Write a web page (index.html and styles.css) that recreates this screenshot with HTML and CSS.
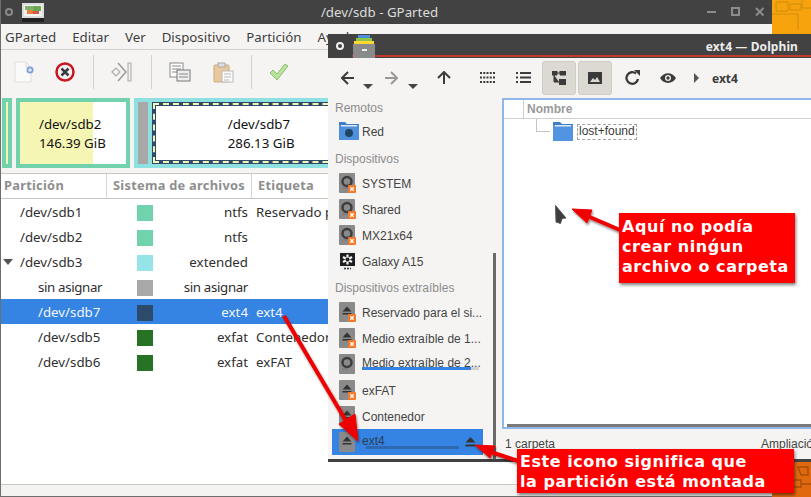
FILE: index.html
```html
<!DOCTYPE html>
<html lang="es">
<head>
  <meta charset="UTF-8" />
  <title>GParted y Dolphin</title>
  <link rel="stylesheet" href="styles.css">
</head>
<body>
  <svg class="defs" width="0" height="0">
    <symbol id="drive" viewBox="0 0 20 20">
      <rect x="0" width="16" height="20" rx="1" fill="#8a8a8a"/>
      <circle cx="8" cy="8.500" r="4.500" fill="none" stroke="#3d3d3d" stroke-width="2.500"/>
      <path d="M3 15h6" stroke="#777"/>
    </symbol>
    <symbol id="eject" viewBox="0 0 20 20">
      <rect x="0" width="16" height="20" rx="1" fill="#8a8a8a"/>
      <path d="M8 4.500l4.500 5h-9z" fill="#333"/>
      <rect x="3.500" y="11" width="9" height="1.500" fill="#333"/>
    </symbol>
    <symbol id="badge" viewBox="0 0 8 8">
      <rect width="8" height="8" rx="1" fill="#f47a2a"/>
      <path d="M2.300 2.300l3.400 3.400M5.700 2.300L2.300 5.700" stroke="#fff" stroke-width="1.300"/>
    </symbol>
  </svg>

  <div class="desktop">
    <svg class="wallpaper wallpaper-top" viewBox="0 0 39 34">
      <path d="M4 2h12v9H4zM18 4h11v6H18zM0 14h26v16M30 0v8h9" fill="none" stroke="#d08c0c" stroke-width="1"/>
    </svg>
    <svg class="wallpaper wallpaper-bottom" viewBox="0 0 39 35">
      <path d="M5 3h9v7h7v8h8v7h-9v-6h-8v-7H5zM26 5h10v8h-7zM30 22h9M3 22h8v9" fill="none" stroke="#a84d0a" stroke-width="1.500"/>
    </svg>

    <!-- GPARTED -->
    <section class="window gparted">
      <header class="titlebar">
        <svg class="gear gear-dim" viewBox="0 0 10 10"><circle cx="5" cy="5" r="3" fill="none" stroke="#8a8a8a" stroke-width="2"/></svg>
        <svg class="app-icon" viewBox="0 0 22 20">
          <rect x="0" y="1" width="22" height="15" fill="#ddd"/>
          <rect x="2" y="3" width="18" height="11" fill="#f4f4f0"/>
          <rect x="3" y="4" width="8" height="4" fill="#7fb26a"/>
          <rect x="11" y="4" width="8" height="5" fill="#6aa84f"/>
          <rect x="5" y="8" width="6" height="4" fill="#e8823a"/>
          <rect x="11" y="9" width="6" height="3" fill="#d9534f"/>
          <rect x="0" y="16" width="22" height="4" fill="#222"/>
        </svg>
        <h1 class="title">/dev/sdb - GParted</h1>
        <div class="controls">
          <svg viewBox="0 0 10 10"><rect y="4" width="9" height="2" fill="#8c8c8c"/></svg>
          <svg viewBox="0 0 10 10"><rect x="1" y="1" width="7" height="7" fill="none" stroke="#8c8c8c" stroke-width="2"/></svg>
          <svg viewBox="0 0 10 10"><path d="M1 1l7.500 7.500M8.500 1L1 8.500" stroke="#8c8c8c" stroke-width="2"/></svg>
        </div>
      </header>

      <nav class="menubar">
        <span>GParted</span><span>Editar</span><span>Ver</span><span>Dispositivo</span><span>Partición</span><span>Ayuda</span>
      </nav>

      <div class="toolbar">
        <svg class="tool" viewBox="0 0 20 22">
          <path d="M1 1h11l5 5v15H1z" fill="#fafafa" stroke="#ddd"/>
          <path d="M12 1v5h5" fill="#eee" stroke="#ddd"/>
          <circle cx="16" cy="9" r="3.500" fill="#7b9fd6"/>
          <path d="M14 9h4M16 7v4" stroke="#fff"/>
        </svg>
        <svg class="tool tool-x" viewBox="0 0 20 20">
          <circle cx="10" cy="10" r="8.500" fill="#f4f4f4" stroke="#c8161d" stroke-width="2.500"/>
          <path d="M6.500 6.500l7 7M13.500 6.500l-7 7" stroke="#3c3c3c" stroke-width="2.500"/>
        </svg>
        <i class="sep sep-a"></i>
        <svg class="tool tool-all" viewBox="0 0 22 20">
          <path d="M1 10l4-4 4 4-4 4z" fill="#f5f4f2" stroke="#aaa" stroke-width="1.200"/>
          <path d="M7 1l8 9-8 9" fill="none" stroke="#999" stroke-width="1.500"/>
          <rect x="17" y="1" width="3" height="18" fill="#eee" stroke="#aaa"/>
        </svg>
        <i class="sep sep-b"></i>
        <svg class="tool tool-copy" viewBox="0 0 22 20">
          <rect x="1" y="1" width="13" height="14" fill="#fff" stroke="#888"/>
          <path d="M3 4h9M3 7h9M3 10h7" stroke="#888"/>
          <rect x="8" y="8" width="13" height="11" fill="#eee" stroke="#777"/>
          <path d="M10 12h9M10 15h9" stroke="#888"/>
        </svg>
        <svg class="tool tool-paste" viewBox="0 0 21 21">
          <rect x="1" y="3" width="15" height="17" rx="1" fill="#e8c89c" stroke="#c8ab80"/>
          <rect x="5" y="1" width="7" height="4" fill="#ddd" stroke="#aaa"/>
          <rect x="9" y="9" width="11" height="11" fill="#fafafa" stroke="#bbb"/>
          <path d="M11 12h7M11 15h7M11 18h5" stroke="#bbb"/>
        </svg>
        <i class="sep sep-c"></i>
        <svg class="tool tool-check" viewBox="0 0 20 20">
          <path d="M1 11l3-3 4 4 8-10 3 2-11 14z" fill="#b9e39b" stroke="#8ebd74"/>
        </svg>
      </div>

      <div class="graph">
        <div class="part part-sliver"><i></i></div>
        <div class="part part-sdb2">
          <span class="part-used"></span>
          <span class="part-label">/dev/sdb2<br>146.39 GiB</span>
        </div>
        <div class="part-ext">
          <i class="part-free"></i>
          <div class="part-sdb7"><span class="part-label">/dev/sdb7<br>286.13 GiB</span></div>
        </div>
      </div>

      <div class="table">
        <div class="thead"><span>Partición</span><span>Sistema de archivos</span><span>Etiqueta</span></div>
        <div class="row"><span class="name lvl1">/dev/sdb1</span><i class="swatch c-ntfs"></i><span class="fs">ntfs</span><span class="tag">Reservado para el sistema</span></div>
        <div class="row"><span class="name lvl1">/dev/sdb2</span><i class="swatch c-ntfs"></i><span class="fs">ntfs</span><span class="tag"></span></div>
        <div class="row"><span class="name lvl1"><b class="expander"></b>/dev/sdb3</span><i class="swatch c-ext"></i><span class="fs">extended</span><span class="tag"></span></div>
        <div class="row"><span class="name lvl2 tight">sin asignar</span><i class="swatch c-free"></i><span class="fs tight">sin asignar</span><span class="tag"></span></div>
        <div class="row selected"><span class="name lvl2">/dev/sdb7</span><i class="swatch c-ext4"></i><span class="fs">ext4</span><span class="tag">ext4</span></div>
        <div class="row"><span class="name lvl2">/dev/sdb5</span><i class="swatch c-exfat"></i><span class="fs">exfat</span><span class="tag">Contenedor</span></div>
        <div class="row"><span class="name lvl2">/dev/sdb6</span><i class="swatch c-exfat"></i><span class="fs">exfat</span><span class="tag">exFAT</span></div>
      </div>
      <footer class="statusbar"></footer>
    </section>

    <!-- DOLPHIN -->
    <section class="window dolphin">
      <header class="titlebar titlebar-dolphin">
        <svg class="gear" viewBox="0 0 10 10"><circle cx="5" cy="5" r="3" fill="none" stroke="#f2f2f2" stroke-width="2"/></svg>
        <svg class="dolphin-icon" viewBox="0 0 22 23">
          <rect x="5" y="0" width="12" height="4" fill="#4a90d9"/>
          <rect x="3" y="3" width="16" height="4" fill="#8bc34a"/>
          <rect x="1" y="6" width="20" height="4" fill="#fdd835"/>
          <rect x="0" y="9" width="22" height="14" fill="#8a8a8a"/>
          <rect x="9" y="14" width="5" height="2" fill="#eee"/>
        </svg>
        <h1 class="title-dolphin">ext4 — Dolphin</h1>
      </header>

      <div class="dolphin-tools">
        <svg class="dt dt-back" viewBox="0 0 14 14"><path d="M7 1L1 7l6 6M1 7h12" fill="none" stroke="#3b3b3b" stroke-width="2"/></svg>
        <i class="caret caret-back"></i>
        <svg class="dt dt-fwd" viewBox="0 0 14 14"><path d="M7 1l6 6-6 6M13 7H1" fill="none" stroke="#999" stroke-width="2"/></svg>
        <i class="caret caret-fwd"></i>
        <svg class="dt dt-up" viewBox="0 0 14 14"><path d="M1 7l6-6 6 6M7 1v12" fill="none" stroke="#3b3b3b" stroke-width="2"/></svg>
        <svg class="dt dt-grid" viewBox="0 0 15 11"><path d="M0 1h15M0 5.500h15M0 10h15" fill="none" stroke="#3b3b3b" stroke-width="2" stroke-dasharray="2 1.250"/></svg>
        <svg class="dt dt-list" viewBox="0 0 15 11"><path d="M0 1h2M4 1h11M0 5.500h2M4 5.500h11M0 10h2M4 10h11" fill="none" stroke="#3b3b3b" stroke-width="2"/></svg>
        <div class="dt-toggle">
          <svg viewBox="0 0 14 14"><path d="M0 0h5v4H0zM8 0h6v4H8zM2 4v7h5M5 2h3" fill="#3b3b3b" stroke="#3b3b3b"/><rect x="7" y="8" width="7" height="6" fill="#3b3b3b"/></svg>
        </div>
        <div class="dt-toggle dt-toggle-2">
          <svg viewBox="0 0 14 12"><path d="M0 0h14v12H0z" fill="#3b3b3b"/><path d="M2 10l3-4 2 2 2-3 3 5z" fill="#dcd9d3"/></svg>
        </div>
        <svg class="dt dt-reload" viewBox="0 0 15 15"><path d="M13 9A5.800 5.800 0 1 1 11 3.500" fill="none" stroke="#3b3b3b" stroke-width="2.300"/><path d="M9 0h6v6z" fill="#3b3b3b"/></svg>
        <svg class="dt dt-eye" viewBox="0 0 16 10"><path d="M0 5c4-6.500 12-6.500 16 0-4 6.500-12 6.500-16 0z" fill="#3b3b3b"/><circle cx="8" cy="5" r="3" fill="#f5f4f2"/><circle cx="8" cy="5" r="1.700" fill="#3b3b3b"/></svg>
        <i class="crumb-arrow"></i>
        <span class="crumb">ext4</span>
      </div>

      <div class="dolphin-body">
        <aside class="places">
          <div class="places-inner">
            <h2 class="places-head first">Remotos</h2>
            <div class="place">
              <svg class="place-icon" viewBox="0 0 20 20">
                <path d="M0 1h6l2 2h12v16H0z" fill="#3f7fc9"/>
                <rect y="4" width="20" height="15" fill="#4f90dd"/>
                <rect x="2" y="4" width="16" height="1.500" fill="#dfe8f2"/>
                <circle cx="10" cy="12" r="4" fill="#1f4466"/>
              </svg>
              <span>Red</span>
            </div>
            <h2 class="places-head">Dispositivos</h2>
            <div class="place"><span class="place-icon"><svg viewBox="0 0 20 20"><use href="#drive"/></svg><svg class="place-badge" viewBox="0 0 8 8"><use href="#badge"/></svg></span><span>SYSTEM</span></div>
            <div class="place"><span class="place-icon"><svg viewBox="0 0 20 20"><use href="#drive"/></svg><svg class="place-badge" viewBox="0 0 8 8"><use href="#badge"/></svg></span><span>Shared</span></div>
            <div class="place"><span class="place-icon"><svg viewBox="0 0 20 20"><use href="#drive"/></svg><svg class="place-badge" viewBox="0 0 8 8"><use href="#badge"/></svg></span><span>MX21x64</span></div>
            <div class="place">
              <svg class="place-icon" viewBox="0 0 20 20">
                <rect x="1" y="0" width="15" height="20" fill="#eee"/>
                <rect x="1" y="2" width="15" height="13" fill="#1e1e1e"/>
                <path d="M8.500 3.500v10M4 6l9 5M13 6l-9 5" stroke="#f2f2f2" stroke-width="2.200"/>
                <circle cx="8.500" cy="8.500" r="2" fill="#1e1e1e"/>
                <path d="M5 17.500h7" stroke="#333" stroke-width="1.500" stroke-dasharray="2 1"/>
              </svg>
              <span>Galaxy A15</span>
            </div>
            <h2 class="places-head places-head-2">Dispositivos extraíbles</h2>
            <div class="place"><span class="place-icon"><svg viewBox="0 0 20 20"><use href="#eject"/></svg><svg class="place-badge" viewBox="0 0 8 8"><use href="#badge"/></svg></span><span>Reservado para el si...</span></div>
            <div class="place"><span class="place-icon"><svg viewBox="0 0 20 20"><use href="#eject"/></svg><svg class="place-badge" viewBox="0 0 8 8"><use href="#badge"/></svg></span><span>Medio extraíble de 1...</span></div>
            <div class="place place-used">
              <span class="place-icon"><svg viewBox="0 0 20 20"><use href="#drive"/></svg></span>
              <span class="place-text">Medio extraíble de 2...<i class="usage"><b></b></i></span>
            </div>
            <div class="place"><span class="place-icon"><svg viewBox="0 0 20 20"><use href="#eject"/></svg><svg class="place-badge" viewBox="0 0 8 8"><use href="#badge"/></svg></span><span>exFAT</span></div>
            <div class="place"><span class="place-icon"><svg viewBox="0 0 20 20"><use href="#eject"/></svg></span><span>Contenedor</span></div>
            <div class="place place-active">
              <span class="place-icon"><svg viewBox="0 0 20 20"><use href="#eject"/></svg></span>
              <span class="place-text">ext4</span>
              <i class="active-usage"></i>
              <svg class="eject-btn" viewBox="0 0 11 10"><path d="M5.500 0l5 5.500H.5z" fill="#333"/><rect x=".5" y="7.500" width="10" height="2" fill="#333"/></svg>
            </div>
          </div>
          <i class="places-scroll"></i>
        </aside>

        <div class="main">
          <div class="view">
            <div class="view-head"><span class="view-gutter"></span><span class="view-col">Nombre</span></div>
            <div class="view-row">
              <i class="branch"></i>
              <svg class="folder" viewBox="0 0 20 19">
                <path d="M0 0h7l2 2h11v17H0z" fill="#3f7fc9"/>
                <rect y="3" width="20" height="16" fill="#5294e2"/>
                <rect x="2" y="3" width="16" height="1.500" fill="#dfe8f2"/>
              </svg>
              <span class="focus-name">lost+found</span>
            </div>
            <i class="view-scroll"></i>
          </div>
          <div class="status"><span>1 carpeta</span><span>Ampliación</span></div>
        </div>
      </div>
    </section>

    <!-- NOTAS -->
    <svg class="arrows" viewBox="0 0 811 497">
      <defs>
        <filter id="shadow" x="-20%" y="-20%" width="140%" height="140%">
          <feDropShadow dx="1" dy="2" stdDeviation="1.200" flood-color="#000" flood-opacity=".45"/>
        </filter>
      </defs>
      <g fill="#ee0000" stroke="#ee0000" filter="url(#shadow)">
        <path d="M284 316L349 426" stroke-width="4" fill="none"/>
        <path d="M358 441L339 424L355 414z"/>
        <path d="M518 461L488 451" stroke-width="4" fill="none"/>
        <path d="M475 445L495 446L490 458z"/>
        <path d="M620 230L585 215" stroke-width="4" fill="none"/>
        <path d="M572 209L592 210L587 223z"/>
      </g>
    </svg>
    <svg class="cursor" viewBox="0 0 12 20"><path d="M0.500 0.500L11 13l-4 .5 -1.500 5L1 17z" fill="#3d3d3d" stroke="#555"/></svg>
    <div class="note note-a">Aquí no podía<br>crear ninǵun<br>archivo o carpeta</div>
    <div class="note note-b">Este icono significa que<br>la partición está montada</div>
  </div>
</body>
</html>
```

FILE: styles.css
```css
html, body {
  margin: 0;
  padding: 0;
  overflow: hidden;
  height: 100%;
}

.defs {
  position: absolute;
}

.desktop {
  position: relative;
  width: 811px;
  height: 497px;
  overflow: hidden;
  background: #f7a30d;
  font-family: "Noto Sans", sans-serif;
}

.wallpaper {
  position: absolute;
  left: 772px;
  width: 39px;
}

.wallpaper-top {
  top: 0;
  height: 34px;
}

.wallpaper-bottom {
  top: 462px;
  height: 35px;
  background: #e0690f;
}

.window {
  position: absolute;
  display: flex;
  flex-direction: column;
}

/* GPARTED */
.gparted {
  left: 0;
  top: 0;
  width: 772px;
  height: 497px;
  box-sizing: border-box;
  background: #fff;
  border-left: 1px solid #6e6e6e;
  border-bottom: 1px solid #6e6e6e;
}

.titlebar {
  position: relative;
  flex: none;
  display: flex;
  align-items: center;
  height: 24px;
  background: #424242;
}

.gear {
  flex: none;
  width: 10px;
  height: 10px;
  margin-left: 7px;
}

.gear-dim {
  margin-left: 3px;
}

.app-icon {
  flex: none;
  width: 22px;
  height: 20px;
  margin-left: 8px;
}

.title {
  position: absolute;
  left: 0;
  right: 14px;
  margin: 0;
  text-align: center;
  font-size: 13.3px;
  font-weight: normal;
  color: #dcdcdc;
}

.controls {
  position: absolute;
  right: 7px;
  display: flex;
  gap: 14px;
}

.controls svg {
  width: 10px;
  height: 10px;
}

.menubar {
  flex: none;
  display: flex;
  gap: 16px;
  height: 26px;
  box-sizing: border-box;
  padding: 3px 0 0 4px;
  background: #f5f4f2;
  border-bottom: 1px solid #d4d2ce;
  font-size: 13.3px;
  line-height: 20px;
  color: #3d3d3d;
}

.toolbar {
  flex: none;
  display: flex;
  align-items: center;
  height: 42px;
  box-sizing: border-box;
  padding: 2px 0 0 13px;
  background: #f5f4f2;
}

.tool {
  flex: none;
  width: 20px;
  height: 22px;
}

.tool-x {
  margin-left: 21px;
  height: 20px;
}

.sep {
  flex: none;
  width: 1px;
  height: 34px;
  background: #d4d2ce;
}

.sep-a {
  margin-left: 18px;
}

.tool-all {
  width: 22px;
  margin-left: 17px;
  height: 20px;
}

.sep-b {
  margin-left: 18px;
}

.tool-copy {
  width: 22px;
  margin-left: 17px;
  height: 20px;
}

.tool-paste {
  width: 21px;
  margin-left: 22px;
  height: 21px;
}

.sep-c {
  margin-left: 17px;
}

.tool-check {
  width: 20px;
  margin-left: 17px;
  height: 20px;
}

.graph {
  flex: none;
  display: flex;
  gap: 4px;
  height: 82px;
  box-sizing: border-box;
  padding: 6px 0 0 1px;
  background: #f5f4f2;
  border-bottom: 1px solid #c9c7c3;
  align-items: flex-start;
}

.part {
  position: relative;
  box-sizing: border-box;
  height: 70px;
  border: 4px solid #72d2ae;
  background: #fff;
}

.part-sliver {
  width: 10px;
}

.part-sliver i {
  display: block;
  width: 2px;
  height: 100%;
  background: #f6f6b4;
}

.part-sdb2 {
  width: 114px;
}

.part-used {
  position: absolute;
  left: 0;
  top: 0;
  bottom: 0;
  width: 73px;
  background: #f6f6b4;
}

.part-label {
  position: relative;
  display: block;
  font-size: 13.3px;
  line-height: 19px;
  color: #111;
}

.part-sdb2 .part-label {
  padding: 13px 0 0 19px;
}

.part-ext {
  display: flex;
  gap: 4px;
  box-sizing: border-box;
  width: 640px;
  height: 70px;
  border: 4px solid #8fe0e0;
  background: #8fe0e0;
}

.part-free {
  flex: none;
  width: 10px;
  background: #a8a8a8;
}

.part-sdb7 {
  flex: 1;
  box-sizing: border-box;
  border: 4px solid #2e4a6b;
  outline: 2px dashed #f6f6b4;
  outline-offset: -3px;
  background: #fff;
}

.part-sdb7 .part-label {
  padding: 9px 0 0 72px;
}

.table {
  flex: 1;
  background: #fff;
  font-size: 13.3px;
  color: #2f2f2f;
}

.thead {
  display: grid;
  grid-template-columns: 106px 145px 1fr;
  height: 25px;
  box-sizing: border-box;
  border-bottom: 1px solid #c9c7c3;
  font-size: 12.8px;
  font-weight: bold;
  line-height: 23px;
  letter-spacing: .28px;
  color: #8e8e8e;
}

.thead span {
  padding-left: 6px;
  border-right: 1px solid #d8d6d2;
}

.thead span:first-child {
  padding-left: 3px;
}

.row {
  display: grid;
  grid-template-columns: 136px 16px 95px 1fr;
  align-items: center;
  height: 25px;
  line-height: 27px;
  white-space: nowrap;
}

.row.selected {
  background: #3584e4;
  color: #f2f6fc;
}

.name {
  display: flex;
  align-items: center;
}

.tight {
  letter-spacing: -.35px;
}

.lvl1 {
  padding-left: 19px;
  position: relative;
}

.lvl2 {
  padding-left: 37px;
}

.expander {
  position: absolute;
  left: 2px;
  top: 10px;
  border-left: 5.500px solid transparent;
  border-right: 5.500px solid transparent;
  border-top: 6px solid #555;
}

.swatch {
  width: 16px;
  height: 16px;
}

.c-ntfs { background: #72d2ae; }
.c-ext { background: #96e4e8; }
.c-free { background: #a8a8a8; }
.c-ext4 { background: #2e4a6b; }
.c-exfat { background: #267326; }

.fs {
  text-align: right;
}

.tag {
  padding-left: 8px;
}

.statusbar {
  flex: none;
  height: 11px;
  background: #f4f3f1;
  border-top: 1px solid #c9c7c3;
}

/* DOLPHIN */
.dolphin {
  left: 328px;
  top: 34px;
  width: 483px;
  height: 428px;
  box-sizing: border-box;
  background: #f5f4f2;
  border-bottom: 3px solid #424242;
  font-family: "Liberation Sans", sans-serif;
  font-size: 12px;
  color: #444;
}

.titlebar-dolphin {
  height: 24px;
}

.titlebar-dolphin::after {
  content: "";
  position: absolute;
  left: 24px;
  right: 0;
  bottom: 1px;
  height: 2px;
  background: #c23b2e;
}

.dolphin-icon {
  position: relative;
  z-index: 1;
  flex: none;
  width: 22px;
  height: 23px;
  margin-left: 8px;
}

.title-dolphin {
  margin: 0 13px 0 auto;
  font-family: "Noto Sans", sans-serif;
  font-size: 12px;
  font-weight: bold;
  letter-spacing: .1px;
  color: #ededed;
}

.dolphin-tools {
  flex: none;
  position: relative;
  display: flex;
  align-items: center;
  height: 40px;
}

.dt {
  flex: none;
  width: 14px;
  height: 14px;
  margin-top: -1px;
}

.dt-back { margin-left: 13px; }
.dt-fwd { margin-left: 11px; }
.dt-up { margin-left: 19px; }
.dt-grid { margin-left: 29px; width: 15px; height: 11px; }
.dt-list { margin-left: 21px; width: 15px; height: 11px; }
.dt-reload { margin-left: 13px; width: 15px; height: 15px; }
.dt-eye { margin-left: 20px; width: 16px; height: 10px; }

.caret {
  flex: none;
  margin: 16px 0 0 8px;
  border-left: 5px solid transparent;
  border-right: 5px solid transparent;
  border-top: 5px solid #444;
}

.caret-fwd { margin-left: 10px; }

.dt-toggle {
  flex: none;
  display: flex;
  align-items: center;
  justify-content: center;
  width: 34px;
  height: 34px;
  margin-left: 11px;
  box-sizing: border-box;
  background: #dcd9d3;
  border: 1px solid #cfccc6;
  border-radius: 3px;
}

.dt-toggle svg {
  width: 14px;
  height: 14px;
}

.dt-toggle-2 {
  margin-left: 2px;
}

.crumb-arrow {
  flex: none;
  margin-left: 18px;
  border-top: 5px solid transparent;
  border-bottom: 5px solid transparent;
  border-left: 5px solid #555;
}

.crumb {
  margin-left: 13px;
  font-family: "Noto Sans", sans-serif;
  font-size: 12px;
  font-weight: bold;
  color: #3b3b3b;
}

.dolphin-body {
  flex: 1;
  display: flex;
  min-height: 0;
}

.places {
  position: relative;
  flex: none;
  width: 174px;
  padding-top: 5px;
  box-sizing: border-box;
  overflow: hidden;
}

.places-inner {
  height: 100%;
  overflow: hidden;
}

.places-head {
  margin: 2px 0 0;
  padding-left: 7px;
  height: 24px;
  font-size: 12px;
  font-weight: normal;
  line-height: 26px;
  color: #8c8c8c;
}

.places-head.first {
  margin-top: -9px;
  line-height: 28px;
}

.places-head-2 {
  margin-top: 1px;
}

.place {
  position: relative;
  display: flex;
  align-items: center;
  gap: 3px;
  width: 151px;
  height: 26px;
  margin-left: 4px;
  padding-left: 7px;
  box-sizing: border-box;
  white-space: nowrap;
}

.place > span:not(.place-icon) {
  padding-top: 2px;
}

.place-icon {
  position: relative;
  flex: none;
  display: block;
  width: 20px;
  height: 20px;
}

.place-icon svg {
  display: block;
  width: 20px;
  height: 20px;
}

.place-icon .place-badge {
  position: absolute;
  left: 9px;
  bottom: 0;
  width: 8px;
  height: 8px;
}

.place-text {
  position: relative;
}

.place-used .place-text {
  top: -2px;
}

.usage {
  position: absolute;
  left: 0;
  top: 13px;
  width: 117px;
  height: 3px;
  background: #d4d2ce;
}

.usage b {
  display: block;
  width: 109px;
  height: 3px;
  background: #3584e4;
}

.place-active {
  background: #3584e4;
  color: #2c3b52;
}

.place-active .place-text {
  top: -2px;
}

.active-usage {
  position: absolute;
  left: 34px;
  top: 17px;
  width: 93px;
  height: 3px;
  background: #2f68ae;
}

.eject-btn {
  position: absolute;
  right: 7px;
  top: 8px;
  width: 11px;
  height: 10px;
}

.places-scroll {
  position: absolute;
  left: 165px;
  top: 155px;
  bottom: 0;
  width: 3px;
  background: #6a6a6a;
}

.main {
  flex: 1;
  display: flex;
  flex-direction: column;
  min-width: 0;
}

.view {
  position: relative;
  flex: none;
  height: 331px;
  box-sizing: border-box;
  background: #fff;
  border: 2px solid #8db8e8;
  border-right: none;
}

.view-head {
  display: flex;
  height: 19px;
  box-sizing: border-box;
  border-bottom: 1px solid #cfcfcf;
  line-height: 18px;
}

.view-gutter {
  width: 19px;
  border-right: 1px solid #cfcfcf;
}

.view-col {
  padding-left: 3px;
  font-weight: bold;
  color: #9a9a9a;
}

.view-row {
  position: relative;
  display: flex;
  align-items: center;
  height: 24px;
  padding-left: 49px;
}

.branch {
  position: absolute;
  left: 32px;
  top: 0;
  width: 14px;
  height: 13px;
  box-sizing: border-box;
  border-left: 1px solid #c4c4c4;
  border-bottom: 1px solid #c4c4c4;
}

.folder {
  flex: none;
  width: 20px;
  height: 19px;
}

.focus-name {
  margin: 1px 0 0 4px;
  padding: 0 1px;
  height: 14px;
  line-height: 13px;
  border: 1px dashed #a0a0a0;
  color: #3a3a3a;
}

.view-scroll {
  position: absolute;
  left: 3px;
  right: 0;
  bottom: 0;
  height: 3px;
  background: #7a7a7a;
}

.status {
  flex: 1;
  display: flex;
  justify-content: space-between;
  padding: 8px 0 0 3px;
  white-space: nowrap;
  overflow: hidden;
  color: #444;
}

.status span:last-child {
  width: 50px;
}

/* NOTAS */
.arrows {
  position: absolute;
  left: 0;
  top: 0;
  width: 811px;
  height: 497px;
  pointer-events: none;
}

.cursor {
  position: absolute;
  left: 555px;
  top: 205px;
  width: 12px;
  height: 20px;
}

.note {
  position: absolute;
  box-sizing: border-box;
  padding: 3px;
  background: #ff0000;
  box-shadow: 1px 2px 3px rgba(0, 0, 0, 0.5);
  font-family: "DejaVu Sans", sans-serif;
  font-size: 16px;
  font-weight: bold;
  line-height: 20px;
  letter-spacing: .55px;
  white-space: nowrap;
  color: #fff;
}

.note-a {
  left: 619px;
  top: 213px;
  width: 176px;
  height: 70px;
  padding-top: 4px;
}

.note-b {
  left: 517px;
  top: 449px;
  width: 277px;
  height: 44px;
  padding-top: 3px;
}
```
